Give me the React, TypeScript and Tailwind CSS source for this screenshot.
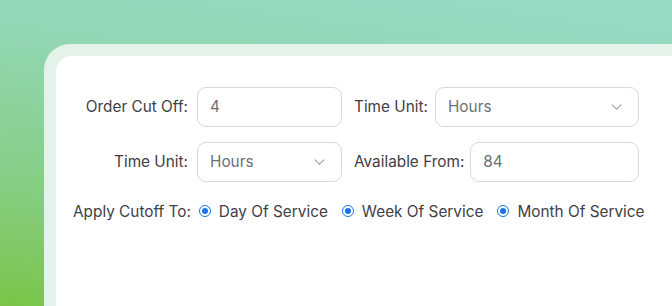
import React from "react";

function Chevron() {
  return (
    <svg width="11" height="6" viewBox="0 0 11 6" fill="none" className="shrink-0 mr-[1px]">
      <path d="M1 0.8l4.5 4.4 4.5-4.4" stroke="#9a9ea6" strokeWidth="1.1" strokeLinecap="round" strokeLinejoin="round" />
    </svg>
  );
}

function Radio({ label }: { label: string }) {
  return (
    <label className="flex items-center gap-[8px]">
      <span className="w-[12px] h-[12px] rounded-full border-[1.5px] border-[#1a73e8] flex items-center justify-center">
        <span className="w-[6px] h-[6px] rounded-full bg-[#1a73e8]" />
      </span>
      <span>{label}</span>
    </label>
  );
}

export default function App() {
  const inputCls =
    "h-[40px] rounded-[9px] border border-[#d6d9dc] bg-white flex items-center pl-[12px] pr-[15px] text-[#6b6f76]";
  return (
    <div
      className="w-[672px] h-[306px] overflow-hidden pl-[44px] pt-[44px] bg-[linear-gradient(188deg,#99dac6_0%,#93d6b4_30%,#86cd82_70%,#7bc448_100%)]"
      style={{ fontFamily: "Inter, 'Noto Sans', sans-serif" }}
    >
      <div className="w-[700px] h-[300px] rounded-tl-[26px] bg-[#e4f3ea] pl-[12px] pt-[12px]">
        <div className="w-[700px] h-[300px] rounded-tl-[16px] bg-white pl-[17px] pt-[31px] text-[15.35px] text-[#3f4046]">
          <div className="flex items-center w-[566px]">
            <div className="w-[115px] text-right">Order Cut Off:</div>
            <div className={inputCls + " ml-[9px] w-[145px]"}>4</div>
            <div className="ml-[12px]">Time Unit:</div>
            <div className={inputCls + " ml-[7px] flex-1 justify-between"}>
              <span>Hours</span>
              <Chevron />
            </div>
          </div>
          <div className="flex items-center w-[566px] mt-[15px]">
            <div className="w-[115px] text-right">Time Unit:</div>
            <div className={inputCls + " ml-[9px] w-[145px] justify-between"}>
              <span>Hours</span>
              <Chevron />
            </div>
            <div className="ml-[12px]">Available From:</div>
            <div className={inputCls + " ml-[6px] flex-1"}>84</div>
          </div>
          <div className="flex items-center mt-[19px] h-[20px]">
            <div>Apply Cutoff To:</div>
            <div className="ml-[8px] flex items-center gap-[14px]">
              <Radio label="Day Of Service" />
              <Radio label="Week Of Service" />
              <Radio label="Month Of Service" />
            </div>
          </div>
        </div>
      </div>
    </div>
  );
}
